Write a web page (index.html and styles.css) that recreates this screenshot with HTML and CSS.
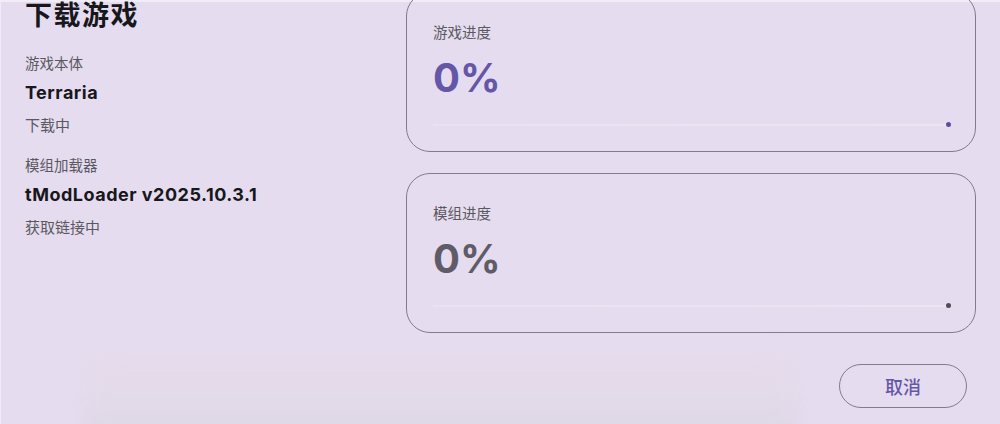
FILE: index.html
```html
<!DOCTYPE html>
<html lang="zh-CN">
<head>
  <meta charset="UTF-8">
  <meta name="viewport" content="width=device-width, initial-scale=1.0">
  <title>下载游戏</title>
  <link rel="stylesheet" href="styles.css">
</head>
<body>
  <div class="pagina">
    <div class="conteudo">
      <!-- coluna da esquerda -->
      <section class="info">
        <h1>下载游戏</h1>
        <div class="grupo">
          <span class="rotulo">游戏本体</span>
          <span class="nome">Terraria</span>
          <span class="estado">下载中</span>
        </div>
        <div class="grupo">
          <span class="rotulo">模组加载器</span>
          <span class="nome">tModLoader v2025.10.3.1</span>
          <span class="estado">获取链接中</span>
        </div>
      </section>

      <!-- cartoes de progresso -->
      <section class="cartoes">
        <div class="cartao">
          <span class="rotulo">游戏进度</span>
          <span class="pct pct-roxo">0%</span>
          <div class="trilha"><span class="ponto ponto-roxo"></span></div>
        </div>
        <div class="cartao">
          <span class="rotulo">模组进度</span>
          <span class="pct pct-cinza">0%</span>
          <div class="trilha"><span class="ponto ponto-cinza"></span></div>
        </div>
      </section>
    </div>

    <div class="rodape">
      <button class="btn-cancelar">取消</button>
    </div>

    <div class="mancha"></div>
  </div>
</body>
</html>
```

FILE: styles.css
```css
:root {
  --fundo: #e5ddef;
  --borda: #807d88;
  --roxo: #6556a8;
  --cinza-texto: #5a5860;
  --cinza-pct: #5f5c68;
  --preto: #18171b;
}

body {
  margin: 0;
  background: var(--fundo);
  font-family: Inter, "Noto Sans CJK SC", sans-serif;
  color: var(--preto);
  overflow: hidden;
}

.pagina {
  position: relative;
  height: 424px;
  border-top: 2px solid #f1edf6;
  border-left: 1px solid #f1edf6;
  box-sizing: border-box;
}

.conteudo {
  display: grid;
  grid-template-columns: 1fr 570px;
  margin: -10px 24px 0 24px;
}

.info {
  display: flex;
  flex-direction: column;
  gap: 18px;
}

.info h1 {
  margin: 6px 0 1px;
  font-size: 27px;
  line-height: 36px;
  font-weight: 700;
  letter-spacing: 1.5px;
}

.grupo {
  display: flex;
  flex-direction: column;
}

.rotulo {
  font-size: 14.5px;
  line-height: 22px;
  color: var(--cinza-texto);
}

.grupo .nome {
  font-size: 18px;
  line-height: 24px;
  font-weight: 700;
  letter-spacing: 0.5px;
  margin-top: 6px;
  margin-bottom: 10px;
}

.grupo .estado {
  font-size: 15px;
  line-height: 22px;
  color: var(--cinza-texto);
}

.cartoes {
  display: flex;
  flex-direction: column;
  gap: 21px;
}

.cartao {
  height: 160px;
  box-sizing: border-box;
  border: 1.5px solid var(--borda);
  border-radius: 24px;
  padding: 30px 26px 0 26px;
  display: flex;
  flex-direction: column;
}

.cartao .rotulo {
  line-height: 20px;
}

.pct {
  margin-top: 10px;
  font-size: 40px;
  line-height: 50px;
  font-weight: 700;
}

.pct-roxo { color: var(--roxo); }
.pct-cinza { color: var(--cinza-pct); }

.trilha {
  position: relative;
  margin-top: 21px;
  margin-right: 0;
  height: 2px;
  background: linear-gradient(90deg, #e9e3f1, #ebe6f2);
}

.ponto {
  position: absolute;
  right: -2px;
  top: -2px;
  width: 5px;
  height: 5px;
  border-radius: 50%;
}

.ponto-roxo { background: #5b4ea2; }
.ponto-cinza { background: #4f4d56; }

.rodape {
  display: flex;
  justify-content: flex-end;
  margin: 31px 33px 0 0;
}

.btn-cancelar {
  width: 128px;
  height: 44px;
  border: 1.5px solid var(--borda);
  border-radius: 22px;
  background: transparent;
  color: var(--roxo);
  font-family: "Noto Sans CJK SC", sans-serif;
  font-size: 18px;
  font-weight: 500;
  cursor: pointer;
}

.mancha {
  position: absolute;
  left: 80px;
  bottom: -20px;
  width: 720px;
  height: 90px;
  border-radius: 30px;
  background: linear-gradient(180deg, #e6d9ea 0%, #e2dbe9 55%, #d8d2e0 100%);
  filter: blur(10px);
  opacity: 0.8;
  z-index: -1;
}
```
